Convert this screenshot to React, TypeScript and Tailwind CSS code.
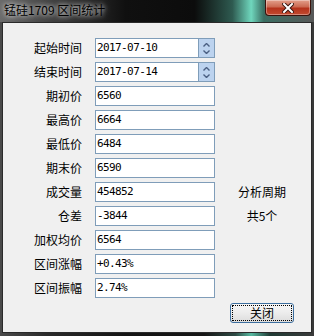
import React from "react";

const rows: { label: string; value: string; spin?: boolean; extra?: string }[] = [
  { label: "起始时间", value: "2017-07-10", spin: true },
  { label: "结束时间", value: "2017-07-14", spin: true },
  { label: "期初价", value: "6560" },
  { label: "最高价", value: "6664" },
  { label: "最低价", value: "6484" },
  { label: "期末价", value: "6590" },
  { label: "成交量", value: "454852", extra: "分析周期" },
  { label: "仓差", value: "-3844", extra: "共5个" },
  { label: "加权均价", value: "6564" },
  { label: "区间涨幅", value: "+0.43%" },
  { label: "区间振幅", value: "2.74%" },
];

function Spinner() {
  return (
    <div className="w-[16px] h-full border-l border-[#7f9db9] bg-[#bcd3ef] flex flex-col items-center justify-center gap-[3px]">
      <svg width="7" height="4" viewBox="0 0 7 4">
        <path d="M0.5 3.5 L3.5 0.5 L6.5 3.5" stroke="#4a5f82" strokeWidth="1.4" fill="none" />
      </svg>
      <svg width="7" height="4" viewBox="0 0 7 4">
        <path d="M0.5 0.5 L3.5 3.5 L6.5 0.5" stroke="#4a5f82" strokeWidth="1.4" fill="none" />
      </svg>
    </div>
  );
}

export default function App() {
  return (
    <div className="w-[314px] h-[336px] flex flex-col bg-[linear-gradient(to_right,#4a4a4a_0%,#2a2a2a_15%,#141414_40%,#161616_65%,#2d4a44_75%,#56b9a0_80%,#1f3a34_86%,#3a3a3a_100%)] overflow-hidden">
      <div className="h-[22px] flex items-start justify-between bg-[linear-gradient(to_right,#6a6a6a_0%,#3c3c3c_18%,#101010_40%,#0c0c0c_62%,#2e5a50_74%,#6fd7bd_80%,#3a6e62_84%,#585858_100%)]">
        <div className="pl-[4px] pt-[3px] text-[12px] leading-[14px] text-black [font-family:'Noto_Sans_CJK_SC',sans-serif] [text-shadow:0_0_4px_rgba(255,255,255,0.9),0_0_8px_rgba(255,255,255,0.6)]">
          锰硅1709 区间统计
        </div>
        <div className="mr-[3px] w-[46px] h-[16px] rounded-b-[4px] border border-t-0 border-[#3a120c] bg-[linear-gradient(to_bottom,#e3a08c_0%,#cc6a52_45%,#b5331c_55%,#c24a30_100%)] flex items-center justify-center shadow-[inset_0_0_0_1px_rgba(255,255,255,0.35)]">
          <svg width="12" height="10" viewBox="0 0 12 10">
            <path d="M2 1 L10 9 M10 1 L2 9" stroke="#3a1510" strokeWidth="4" strokeLinecap="square" />
            <path d="M2 1 L10 9 M10 1 L2 9" stroke="#ffffff" strokeWidth="2" strokeLinecap="square" />
          </svg>
        </div>
      </div>
      <div className="ml-[2px] mr-[2px] mb-[3px] flex-1 border border-[#2a2a2a] bg-[#f0f0f0] pt-[15px] flex flex-col gap-[4px] [font-family:'Noto_Sans_CJK_SC',sans-serif] text-[12px] text-black">
        {rows.map((r) => (
          <div key={r.label} className="flex items-center h-[20px]">
            <div className="w-[79px] text-right leading-[20px]">{r.label}</div>
            <div className="ml-[13px] w-[120px] h-[20px] border border-[#7f9db9] bg-white flex items-center">
              <div className="flex-1 pl-[1px] text-[11px] tracking-[-0.6px] leading-[18px] [font-family:'DejaVu_Sans_Mono',monospace]">
                {r.value}
              </div>
              {r.spin && <Spinner />}
            </div>
            {r.extra && <div className="w-[94px] text-center leading-[20px]">{r.extra}</div>}
          </div>
        ))}
        <div className="pl-[227px] pt-[1px]">
          <div className="w-[64px] h-[20px] rounded-[3px] border border-[#3c6e9e] bg-[linear-gradient(to_bottom,#f7f7f7_0%,#ececec_50%,#dcdcdc_100%)] p-[1px]">
            <div className="w-full h-full border border-dotted border-black flex items-center justify-center leading-[16px]">
              关闭
            </div>
          </div>
        </div>
      </div>
    </div>
  );
}
